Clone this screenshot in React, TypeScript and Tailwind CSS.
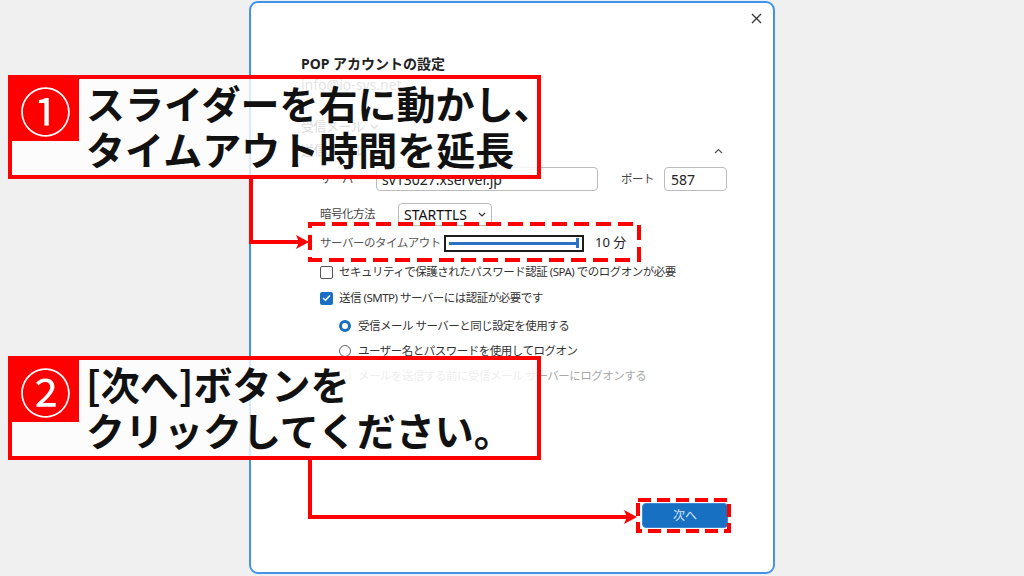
import React from "react";

const jp = { fontFamily: '"Noto Sans", "Noto Sans CJK JP", sans-serif' };
const jpBig = { fontFamily: '"Noto Sans CJK JP", "Noto Sans", sans-serif' };

function ChevDown() {
  return (
    <svg width="9" height="6" viewBox="0 0 9 6" className="ml-[6px]">
      <path d="M1 1 L4.5 4.5 L8 1" fill="none" stroke="#555" strokeWidth="1.2" />
    </svg>
  );
}

function Check() {
  return (
    <div className="w-[13px] h-[13px] rounded-[2px] bg-[#1a6fc4] flex items-center justify-center">
      <svg width="9" height="8" viewBox="0 0 9 8">
        <path d="M1 4 L3.5 6.3 L8 1.5" fill="none" stroke="#fff" strokeWidth="1.5" />
      </svg>
    </div>
  );
}

function Annot({ top, num, l1, l2 }: { top: number; num: string; l1: string; l2: string }) {
  return (
    <div
      className="absolute left-[8px] w-[533px] h-[104px] border-[4px] border-[#ff0000] bg-white/80"
      style={{ top }}
    >
      <div className="absolute left-0 top-0 w-[67px] h-[62px] bg-[#ff0000] flex items-center justify-center">
        <span className="text-white text-[52px] leading-none font-normal" style={jpBig}>
          {num}
        </span>
      </div>
      <div
        className="pl-[74px] text-[39px] leading-[46px] font-bold text-[#111] whitespace-nowrap"
        style={jpBig}
      >
        <div>{l1}</div>
        <div>{l2}</div>
      </div>
    </div>
  );
}

export default function App() {
  return (
    <div className="relative w-[1024px] h-[576px] bg-[#f0f0f0] overflow-hidden flex justify-center" style={jp}>
      {/* dialog */}
      <div className="mt-[1px] w-[526px] h-[573px] bg-white border-2 border-[#4194ea] rounded-[9px] flex flex-col">
        <div className="h-[30px] flex justify-end items-center pr-[11px]">
          <svg width="11" height="11" viewBox="0 0 11 11">
            <path d="M1 1 L10 10 M10 1 L1 10" stroke="#333" strokeWidth="1.3" />
          </svg>
        </div>
        <div className="pl-[50px] pr-[46px] flex flex-col text-[11.5px] tracking-[-0.5px] text-[#333]">
          <div className="mt-[20px] h-[20px] flex items-center text-[14px] tracking-[0px] font-bold text-[#222]" style={jp}>
            POP アカウントの設定
          </div>
          <div className="mt-[1px] h-[20px] flex items-center text-[14px] tracking-[0px] text-[#777]">
            info@io-sys.net
          </div>
          <div className="mt-[23px] h-[20px] flex items-center text-[13px] text-[#444]">
            受信メール
            <ChevDown />
          </div>
          <div className="mt-[4px] h-[20px] flex items-center justify-between text-[13px] text-[#444]">
            <span>送信メール</span>
            <svg width="9" height="6" viewBox="0 0 9 6" className="mr-[4px]">
              <path d="M1 5 L4.5 1.5 L8 5" fill="none" stroke="#555" strokeWidth="1.2" />
            </svg>
          </div>
          {/* server row */}
          <div className="mt-[6px] h-[24px] flex items-center pl-[19px]">
            <span className="w-[56px] text-[#444]">サーバー</span>
            <div className="w-[222px] h-[24px] border border-[#bcbcbc] rounded-[4px] flex items-center pl-[5px] text-[14px] tracking-[0px] text-[#222]">
              sv13027.xserver.jp
            </div>
            <span className="ml-[23px] w-[43px] text-[#444]">ポート</span>
            <div className="w-[63px] h-[24px] border border-[#bcbcbc] rounded-[4px] flex items-center pl-[6px] text-[14px] tracking-[0px] text-[#222]">
              587
            </div>
          </div>
          {/* encryption */}
          <div className="mt-[11px] h-[24px] flex items-center pl-[19px]">
            <span className="w-[78px] text-[#444]">暗号化方法</span>
            <div className="w-[94px] h-[23px] border border-[#bcbcbc] rounded-[4px] flex items-center pl-[5px] pr-[5px] justify-between text-[14px] tracking-[0px] text-[#111]">
              <span>STARTTLS</span>
              <svg width="8" height="5" viewBox="0 0 8 5">
                <path d="M1 1 L4 4 L7 1" fill="none" stroke="#333" strokeWidth="1.2" />
              </svg>
            </div>
          </div>
          {/* timeout */}
          <div className="mt-[7px] h-[20px] flex items-center pl-[19px]">
            <span className="w-[124px] text-[#555]">サーバーのタイムアウト</span>
            <div className="w-[140px] h-[17px] border-2 border-[#1c1c1c] flex items-center pl-[3px] pr-[3px]">
              <div className="flex-1 h-[3px] bg-[#2a73c4]" />
              <div className="w-[3px] h-[10px] bg-[#2a73c4]" />
            </div>
            <span className="ml-[11px] text-[13px] tracking-[0px] text-[#222]">10 分</span>
          </div>
          {/* checkbox 1 */}
          <div className="mt-[9px] h-[20px] flex items-center pl-[19px]">
            <div className="w-[13px] h-[13px] border border-[#555] rounded-[2px] bg-white" />
            <span className="ml-[6px]">セキュリティで保護されたパスワード認証 (SPA) でのログオンが必要</span>
          </div>
          {/* checkbox 2 */}
          <div className="mt-[6px] h-[20px] flex items-center pl-[19px]">
            <Check />
            <span className="ml-[6px]">送信 (SMTP) サーバーには認証が必要です</span>
          </div>
          {/* radios */}
          <div className="mt-[8px] h-[20px] flex items-center pl-[38px]">
            <div className="w-[12px] h-[12px] rounded-full border-[3.5px] border-[#1a6fc4] bg-white" />
            <span className="ml-[7px]">受信メール サーバーと同じ設定を使用する</span>
          </div>
          <div className="mt-[5px] h-[20px] flex items-center pl-[38px]">
            <div className="w-[12px] h-[12px] rounded-full border border-[#666] bg-white" />
            <span className="ml-[7px]">ユーザー名とパスワードを使用してログオン</span>
          </div>
          <div className="mt-[5px] h-[20px] flex items-center pl-[38px] text-[#a8a8a8]">
            <div className="w-[12px] h-[12px] rounded-full border border-[#c4c4c4] bg-white" />
            <span className="ml-[7px]">メールを送信する前に受信メール サーバーにログオンする</span>
          </div>
        </div>
        <div className="flex-1" />
        <div className="flex justify-end pr-[45px] pb-[44px]">
          <div className="w-[86px] h-[25px] rounded-[4px] bg-[#1770c2] border border-[#3b8ad6] flex items-center justify-center text-[12px] text-[#d6e4f4]">
            次へ
          </div>
        </div>
      </div>

      {/* connectors & highlight frames */}
      <svg className="absolute left-0 top-0 pointer-events-none" width="1024" height="576" viewBox="0 0 1024 576">
        <path d="M251 178 V242 H300" fill="none" stroke="#ff0000" strokeWidth="4" />
        <polygon points="309,242 296,235 299,242 296,249" fill="#ff0000" />
        <rect x="310" y="224" width="329" height="36" fill="none" stroke="#ff0000" strokeWidth="4" strokeDasharray="15 7" />
        <path d="M310 458 V517 H628" fill="none" stroke="#ff0000" strokeWidth="4" />
        <polygon points="637,517 624,510 627,517 624,524" fill="#ff0000" />
        <rect x="638" y="500" width="91" height="31" fill="none" stroke="#ff0000" strokeWidth="4" strokeDasharray="13 6" />
      </svg>

      <Annot top={75} num="①" l1="スライダーを右に動かし、" l2="タイムアウト時間を延長" />
      <Annot top={356} num="②" l1="[次へ]ボタンを" l2="クリックしてください。" />
    </div>
  );
}
